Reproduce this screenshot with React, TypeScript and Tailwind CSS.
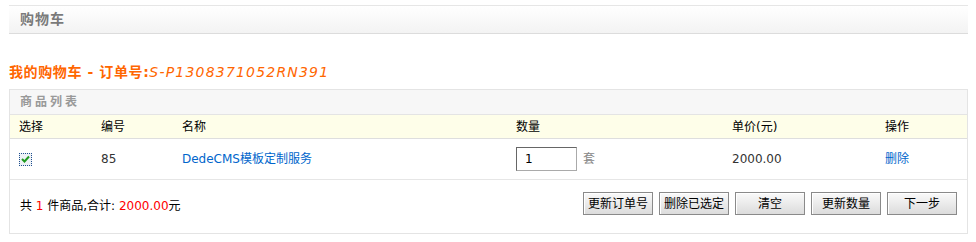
import React from "react";

const font = { fontFamily: '"DejaVu Sans", "Noto Sans CJK SC", sans-serif' };

function Btn({ children }: { children: React.ReactNode }) {
  return (
    <button className="h-[23px] w-[70px] border border-[#8a8a8a] bg-gradient-to-b from-[#fafafa] to-[#dcdcdc] text-[12px] leading-none text-black shadow-[inset_1px_1px_0_#fff]">
      {children}
    </button>
  );
}

export default function App() {
  return (
    <div className="w-[976px] h-[242px] bg-white text-[12px] text-[#333]" style={font}>
      <div className="pt-[5px] pl-[9px] pr-[8px]">
        <div className="h-[29px] border-t border-t-[#e6e6e6] border-b border-b-[#dcdcdc] bg-gradient-to-b from-white to-[#f3f3f3] flex items-center pl-[11px]">
          <span className="text-[14px] font-bold text-[#7a7a7a] tracking-[1px]">购物车</span>
        </div>
        <div className="h-[55px] flex items-end pb-[6px]">
          <span className="text-[14px] font-bold text-[#ff6600] tracking-[0.6px]">
            我的购物车 - 订单号:<span className="italic font-normal tracking-[1.2px]" style={{ fontFamily: '"DejaVu Sans", sans-serif' }}>S-P1308371052RN391</span>
          </span>
        </div>
        <div className="border border-[#e4e4e4]">
          <div className="h-[25px] bg-[#f7f7f7] border-b border-[#e4e4e4] flex items-center pl-[10px]">
            <span className="font-bold text-[#999] tracking-[3px]">商品列表</span>
          </div>
          <div className="h-[24px] bg-[#fefee9] border-b border-[#dedede] grid grid-cols-[82px_81px_334px_216px_153px_1fr] items-center pl-[9px] text-black">
            <span>选择</span>
            <span>编号</span>
            <span>名称</span>
            <span>数量</span>
            <span>单价(元)</span>
            <span>操作</span>
          </div>
          <div className="h-[41px] border-b border-[#e6e6e6] grid grid-cols-[82px_81px_334px_216px_153px_1fr] items-center pl-[9px]">
            <span>
              <span className="w-[13px] h-[13px] border border-dotted border-[#1f4f8f] bg-[#eef2f6] flex items-center justify-center">
                <svg width="9" height="8" viewBox="0 0 9 8">
                  <path d="M1 4 L3.5 6.5 L8 1.5" stroke="#1f9a1f" strokeWidth="2" fill="none" />
                </svg>
              </span>
            </span>
            <span>85</span>
            <span className="text-[#0066cc]">DedeCMS模板定制服务</span>
            <span className="flex items-center">
              <span className="w-[61px] h-[24px] border border-[#aaa] border-t-[#666] border-l-[#666] bg-white flex items-center pl-[8px] text-black">1</span>
              <span className="ml-[6px] text-[#888]">套</span>
            </span>
            <span>2000.00</span>
            <span className="text-[#0066cc]">删除</span>
          </div>
          <div className="h-[53px] flex items-center pl-[10px] pr-[10px]">
            <span className="text-black mt-[-2px]">
              共 <span className="text-[#ff0000]">1</span> 件商品,合计: <span className="text-[#ff0000]">2000.00</span>元
            </span>
            <div className="ml-auto flex gap-[6px] mt-[-6px]">
              <Btn>更新订单号</Btn>
              <Btn>删除已选定</Btn>
              <Btn>清空</Btn>
              <Btn>更新数量</Btn>
              <Btn>下一步</Btn>
            </div>
          </div>
        </div>
      </div>
    </div>
  );
}
